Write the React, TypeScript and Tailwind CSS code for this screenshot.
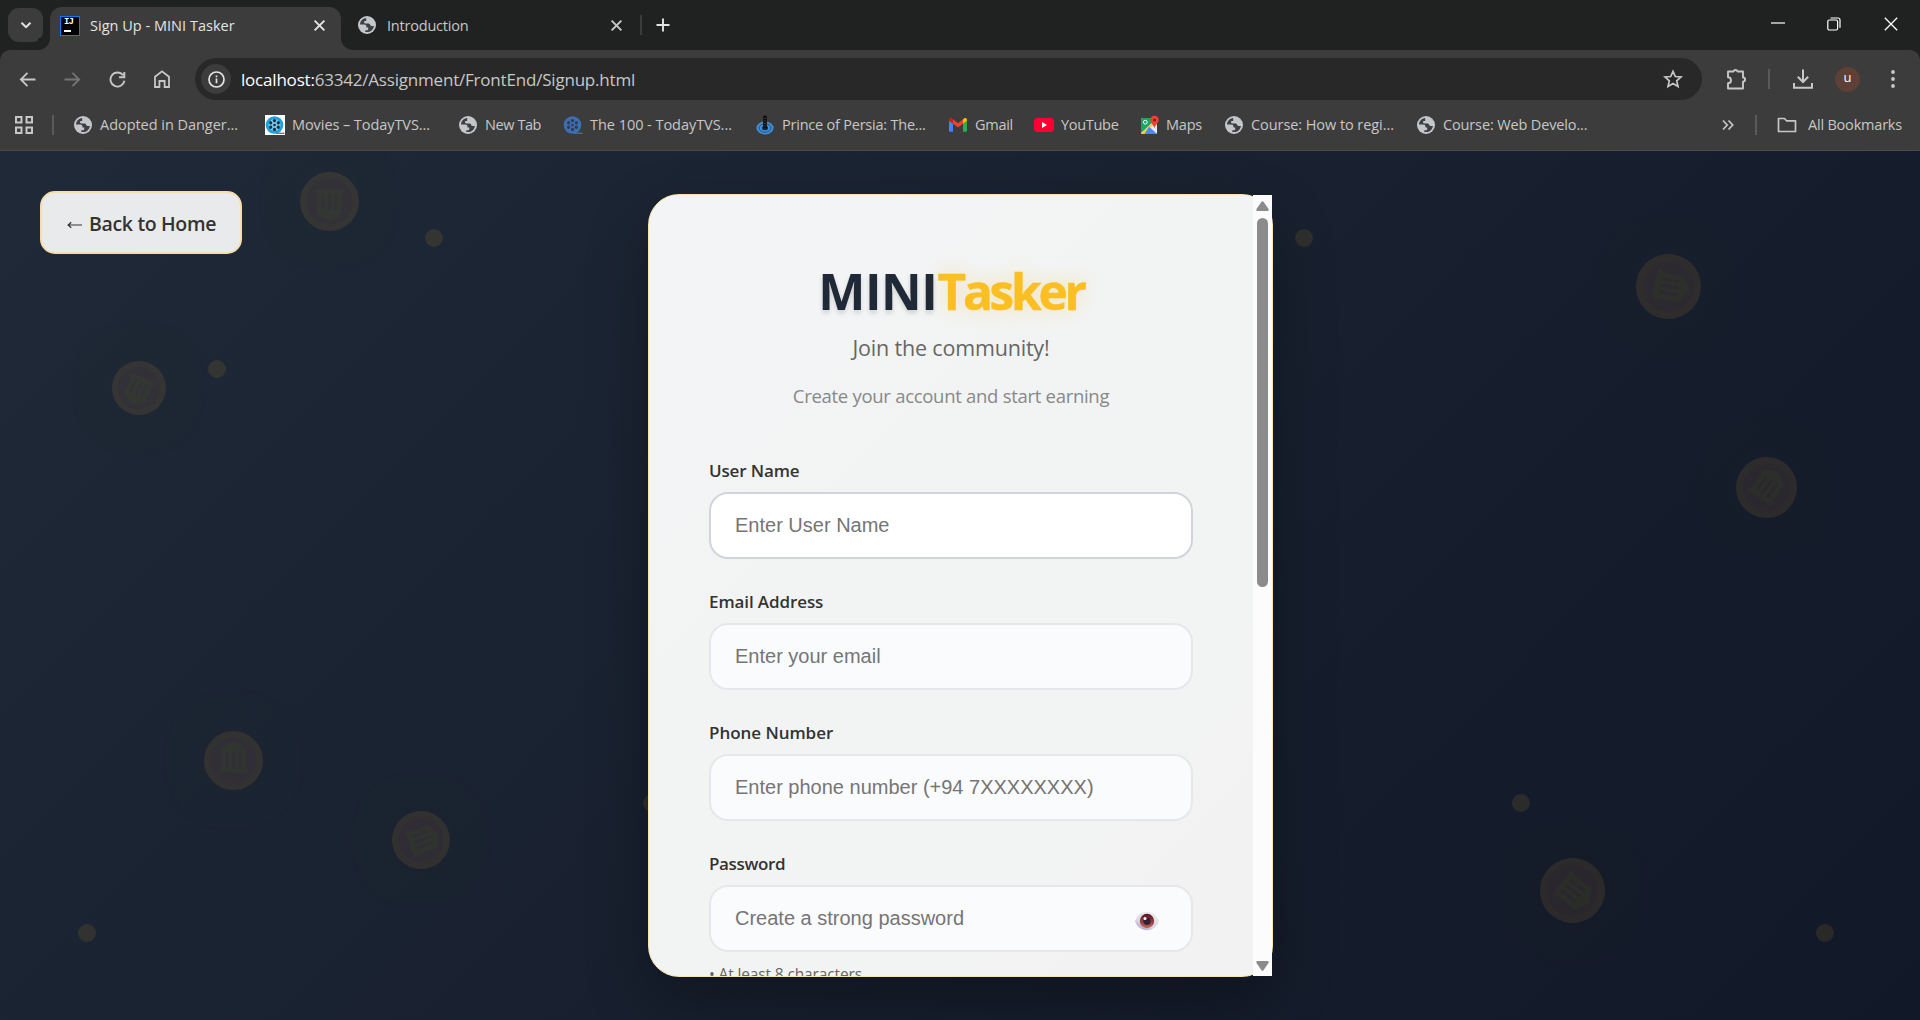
import type { ReactNode } from 'react';

function Globe({ className = 'size-[18px]' }: { className?: string }) {
  return (
    <svg viewBox="0 0 18 18" className={className}>
      <circle cx="9" cy="9" r="9" fill="#c3c6cb" />
      <path d="M8.2 1.9C4.7 2.2 2 5.1 2 8.6h4.2c1.4 0 2.3.9 2.3 2.1v.7h1.7v1.8c0 .7-.7 1-1.400 1H7.300v1.700c4 1 8.100-1.600 8.600-5.900h-2.300c-1 0-1.300-.6-1.600-1.400-.3-.8-1-1.100-1.900-1.100H7.300c-.8 0-1.300-.5-1.300-1.200 0-.8.5-1.300 1.300-1.300h.9V3.700c0-.6 0-1.200 0-1.800z" fill="#3f4043" />
    </svg>
  );
}

function Reel({ boxed = false }: { boxed?: boolean }) {
  const c = boxed ? '#1f9fe0' : '#3d6db5';
  const hole = boxed ? '#13303f' : '#343b49';
  return (
    <svg viewBox="0 0 20 20" className="size-5">
      {boxed && <rect width="20" height="20" fill="#fff" />}
      <circle cx="9.500" cy="10" r="8.800" fill={c} />
      {boxed && <circle cx="9.500" cy="10" r="6" fill="#7cc6ea" />}
      {[0, 60, 120, 180, 240, 300].map((a) => (
        <circle key={a} cx="9.500" cy="5.600" r="1.600" fill={hole} transform={`rotate(${a} 9.5 10)`} />
      ))}
      <circle cx="9.500" cy="10" r="1.300" fill={hole} />
      <path d="M11 18.300h8.500" stroke={boxed ? '#6d7a82' : c} strokeWidth="1.400" />
    </svg>
  );
}

function Persia() {
  return (
    <svg viewBox="0 0 20 20" className="size-5">
      <ellipse cx="10" cy="13" rx="8.600" ry="6.500" fill="#3f8fd6" />
      <ellipse cx="10" cy="13" rx="6" ry="4.300" fill="none" stroke="#24507c" />
      <ellipse cx="10" cy="13" rx="3" ry="2.200" fill="#16263a" />
      <path d="M8.200 1.500 10 .3l1.800 1.200V13H8.200z" fill="#0c0c0c" />
      <path d="M10 3v9" stroke="#777" strokeWidth=".8" strokeDasharray="1 1.500" />
    </svg>
  );
}

function Gmail() {
  return (
    <svg viewBox="0 0 18 18" className="size-[18px]">
      <path d="M0 4.500v10A1.200 1.200 0 0 0 1.200 15.700H4V7.600z" fill="#4285f4" />
      <path d="M18 4.500v10a1.200 1.200 0 0 1-1.200 1.200H14V7.600z" fill="#34a853" />
      <path d="M14 3.500v4.200l4-3V4c0-2-2-2.300-3-1.500z" fill="#fbbc04" />
      <path d="M0 4.700l4 3V3.500L3 2.500C2 1.700 0 2 0 4z" fill="#c5221f" />
      <path d="M4 7.700V3.300l5 3.900 5-3.900v4.400l-5 3.800z" fill="#ea4335" />
    </svg>
  );
}

function YouTube() {
  return (
    <svg viewBox="0 0 20 20" className="size-5">
      <rect y="3" width="20" height="14" rx="3.500" fill="#ff0033" />
      <path d="M8 7v6l5-3z" fill="#fff" />
    </svg>
  );
}

function Maps() {
  return (
    <svg viewBox="0 0 20 20" className="size-5">
      <rect x="1" y="3" width="16" height="16" rx="1.500" fill="#e8eaed" />
      <path d="M1 4.500A1.500 1.500 0 0 1 2.500 3H12v5L1 18z" fill="#1ea362" />
      <path d="M9 11.500 17 19H2.500z" fill="#4a89f3" />
      <path d="M1.200 18.300 13 7l2 2L4.600 19H2.500z" fill="#f7cb4d" />
      <path d="M9 11.800 16.500 19H4.500z" fill="#4a89f3" />
      <path d="M10.500 12.500 17 18.500V8z" fill="#e8eaed" />
      <circle cx="5.300" cy="7.200" r="1.900" fill="none" stroke="#fff" />
      <path d="M14.500.8c2.400 0 4.300 1.800 4.300 4.200 0 3.100-3.700 4.600-4.200 8.500-.6-3.900-4.400-5.400-4.400-8.500 0-2.400 1.900-4.200 4.300-4.200z" fill="#ea4335" />
      <circle cx="14.500" cy="5" r="1.500" fill="#8c1a12" />
    </svg>
  );
}

const bookmarks: { label: string; box: string; text: string; icon: ReactNode }[] = [
  { label: 'Adopted in Danger...', box: 'w-[191px]', text: 'tracking-[-0.04px]', icon: <Globe /> },
  { label: 'Movies – TodayTVS...', box: 'w-[194px]', text: 'tracking-[-0.07px] ml-[1px]', icon: <Reel boxed /> },
  { label: 'New Tab', box: 'w-[104px]', text: 'tracking-[-0.42px]', icon: <Globe /> },
  { label: 'The 100 - TodayTVS...', box: 'w-[192px]', text: 'tracking-[-0.04px] ml-[1px]', icon: <Reel /> },
  { label: 'Prince of Persia: The...', box: 'w-[194px]', text: 'tracking-[-0.22px] ml-[1px]', icon: <Persia /> },
  { label: 'Gmail', box: 'w-[85px]', text: 'tracking-[-0.27px]', icon: <Gmail /> },
  { label: 'YouTube', box: 'w-[106px]', text: 'tracking-[-0.3px] ml-[1px]', icon: <YouTube /> },
  { label: 'Maps', box: 'w-[85px]', text: 'tracking-[-0.23px]', icon: <Maps /> },
  { label: 'Course: How to regi...', box: 'w-[192px]', text: 'tracking-[-0.07px]', icon: <Globe /> },
  { label: 'Course: Web Develo...', box: 'w-[192px]', text: 'tracking-[-0.14px]', icon: <Globe /> },
];

function Cross({ className }: { className: string }) {
  return (
    <svg viewBox="0 0 12 12" className={className} fill="none" stroke="currentColor" strokeWidth="1.800">
      <path d="M1.500 1.500l9 9M10.500 1.500l-9 9" />
    </svg>
  );
}

function TabStrip() {
  return (
    <div className="flex h-[50px] items-end bg-[#202221] text-[14.5px] text-[#e3e3e3]">
      <div className="mb-2 ml-2 flex h-[34px] w-[35px] items-center justify-center rounded-[11px] bg-[#3c3c3c]">
        <svg viewBox="0 0 12 12" className="size-3" fill="none" stroke="#e3e3e3" strokeWidth="2">
          <path d="M1.500 3.800 6 8.200l4.500-4.400" />
        </svg>
      </div>
      <div className="ml-[-5px] size-3 bg-[#3c3c3c]">
        <div className="size-3 rounded-br-[12px] bg-[#202221]" />
      </div>
      <div className="flex h-[43px] w-[291px] items-center rounded-t-[12px] bg-[#3c3c3c] pb-[7px] pl-[10px]">
        <div className="mt-[2px] flex size-5 flex-col items-start border-[1.500px] border-[#0a7cff] bg-black pl-[3px]">
          <span className="h-[11px] font-['Liberation_Mono'] text-[9px] leading-[11px] font-bold tracking-[-1px] text-white">IJ</span>
          <span className="mt-[2px] h-[1.500px] w-[7px] bg-white" />
        </div>
        <span className="mt-[2px] ml-[10px] w-[223px] tracking-[0.02px]">Sign Up - MINI Tasker</span>
        <Cross className="size-[13px]" />
      </div>
      <div className="size-3 bg-[#3c3c3c]">
        <div className="size-3 rounded-bl-[12px] bg-[#202221]" />
      </div>
      <div className="flex h-[43px] items-center pb-[7px] pl-[5px]">
        <Globe className="size-[18px]" />
        <span className="mt-[2px] ml-[11px] w-[223px] tracking-[-0.2px] text-[#c7c7c7]">Introduction</span>
        <Cross className="size-[13px] text-[#c7c7c7]" />
        <span className="ml-[17px] h-5 w-[2px] bg-[#3c3c3c]" />
        <svg viewBox="0 0 14 14" className="ml-[14px] size-[14px]" stroke="#e3e3e3" strokeWidth="1.900">
          <path d="M7 .5v13M.5 7h13" />
        </svg>
      </div>
      <div className="mb-[19px] ml-auto flex w-[149px] items-center">
        <svg viewBox="0 0 14 14" className="size-[14px]" stroke="#fff" strokeWidth="1.200">
          <path d="M0 6h14" />
        </svg>
        <svg viewBox="0 0 14 14" className="ml-[42px] size-[14px]" fill="none" stroke="#fff" strokeWidth="1.200">
          <rect x=".8" y="3" width="9.800" height="10" rx="1.500" />
          <path d="M3.500 1h7.500a2 2 0 0 1 2 2v7.800" />
        </svg>
        <svg viewBox="0 0 14 14" className="ml-[43px] size-[14px]" stroke="#fff" strokeWidth="1.300">
          <path d="M.8.8l12.400 12.400M13.200.8.800 13.200" />
        </svg>
      </div>
    </div>
  );
}

function Toolbar() {
  return (
    <div className="flex h-[50px] items-center pt-[8px] pl-[19px] text-[#c7c7c7]">
      <svg viewBox="0 0 16 16" className="size-[17px]" fill="none" stroke="currentColor" strokeWidth="1.700">
        <path d="M15.500 8H1.500M8 1.700 1.700 8 8 14.300" />
      </svg>
      <svg viewBox="0 0 16 16" className="ml-[28px] size-[17px]" fill="none" stroke="#757575" strokeWidth="1.700">
        <path d="M.5 8h14M8 1.700 14.300 8 8 14.300" />
      </svg>
      <svg viewBox="0 0 16 16" className="ml-[28px] size-[17px]" fill="none" stroke="currentColor" strokeWidth="1.800">
        <path d="M14.500 9.200A6.600 6.600 0 1 1 13.200 4M14.400 1v4.900H9.500" />
      </svg>
      <svg viewBox="0 0 16 18" className="ml-[28px] h-[18px] w-4" fill="none" stroke="currentColor" strokeWidth="1.800">
        <path d="M1 17V6.800L8 1.300l7 5.500V17h-4.400v-6H5.400v6z" />
      </svg>
      <div className="ml-[25px] flex h-[42px] w-[1507px] items-center rounded-full bg-[#282828] pl-[6px]">
        <div className="flex size-[30px] items-center justify-center rounded-full bg-[#3c3c3c]">
          <svg viewBox="0 0 17 17" className="size-[17px]" fill="none" stroke="#e3e3e3" strokeWidth="1.700">
            <circle cx="8.500" cy="8.500" r="7.500" />
            <path d="M8.500 7.600v4.700M8.500 4.500v1.700" />
          </svg>
        </div>
        <span className="mt-px ml-[10px] w-[1420px] text-[17px] tracking-[-0.2px]">
          <span className="text-white">localhost:</span>63342/Assignment/FrontEnd/Signup.html
        </span>
        <svg viewBox="0 0 20 20" className="ml-[2px] size-5 shrink-0" fill="none" stroke="currentColor" strokeWidth="1.700">
          <path d="M10 2.300l2.300 5.200 5.700.5-4.300 3.800 1.300 5.600-5-3-5 3 1.300-5.600L2 8l5.700-.5z" />
        </svg>
      </div>
      <svg viewBox="0 0 22 22" className="ml-[24px] size-[22px]" fill="none" stroke="currentColor" strokeWidth="1.900">
        <path d="M2 3.500h5.500a2.100 2.100 0 0 1 4 0H17v6a2 2 0 0 1 0 4.200V20.500H2v-5.300a3 3 0 0 0 0-6z" strokeLinejoin="round" />
      </svg>
      <span className="ml-[20px] h-5 w-[2px] bg-[#5a5a5a]" />
      <svg viewBox="0 0 20 20" className="ml-[23px] size-5" fill="none" stroke="currentColor" strokeWidth="2">
        <path d="M10 .5v12M4.800 7.800 10 13l5.200-5.200M1 14v4.800h18V14" />
      </svg>
      <span className="ml-[22px] flex size-[25px] items-center justify-center rounded-full bg-[#5d4037] pb-[2px] text-[13px] text-white">u</span>
      <svg viewBox="0 0 4 18" className="ml-[31px] h-[18px] w-1" fill="currentColor">
        <circle cx="2" cy="2" r="1.900" />
        <circle cx="2" cy="9" r="1.900" />
        <circle cx="2" cy="16" r="1.900" />
      </svg>
    </div>
  );
}

function BookmarkBar() {
  return (
    <div className="flex h-[51px] items-center border-b border-[#4a4a4a] pl-[14px] text-[14.5px] text-[#c7c7c7]">
      <svg viewBox="0 0 20 20" className="size-5" fill="none" stroke="currentColor" strokeWidth="2">
        <path d="M2 2h5.500v5.500H2zM12.500 2H18v5.500h-5.500zM2 12.500h5.500V18H2zM12.500 12.500H18V18h-5.500z" />
      </svg>
      <span className="mr-[20px] ml-[18px] h-5 w-[2px] bg-[#5a5a5a]" />
      {bookmarks.map((b) => (
        <div key={b.label} className={`flex shrink-0 items-center whitespace-nowrap ${b.box}`}>
          <span className="w-[26px] shrink-0">{b.icon}</span>
          <span className={b.text}>{b.label}</span>
        </div>
      ))}
      <div className="ml-auto flex items-center pr-[18px]">
        <svg viewBox="0 0 12 12" className="size-3" fill="none" stroke="currentColor" strokeWidth="1.700">
          <path d="M1 1.500 5.200 6 1 10.500M6.500 1.500 10.700 6 6.500 10.500" />
        </svg>
        <span className="ml-[21px] h-5 w-[2px] bg-[#5a5a5a]" />
        <svg viewBox="0 0 20 16" className="ml-[20px] h-4 w-5" fill="none" stroke="currentColor" strokeWidth="1.700">
          <path d="M1.500 14.500v-13h6l2 2.300h9v10.700z" strokeLinejoin="round" />
        </svg>
        <span className="ml-[11px] tracking-[-0.2px]">All Bookmarks</span>
      </div>
    </div>
  );
}

const coins = [
  'left-[300px] top-[21px] size-[59px] rotate-180',
  'left-[112px] top-[210px] size-[54px] rotate-[205deg]',
  'left-[204px] top-[580px] size-[59px]',
  'left-[392px] top-[660px] size-[58px] rotate-[70deg]',
  'left-[1636px] top-[103px] size-[65px] rotate-[100deg]',
  'left-[1736px] top-[306px] size-[61px] rotate-[35deg]',
  'left-[1540px] top-[707px] size-[65px] rotate-[128deg]',
];

const dots = [
  'left-[425px] top-[78px]',
  'left-[208px] top-[209px]',
  'left-[1295px] top-[78px]',
  'left-[643px] top-[643px]',
  'left-[1512px] top-[643px]',
  'left-[78px] top-[773px]',
  'left-[1816px] top-[773px]',
];

function Coin({ place }: { place: string }) {
  return (
    <div className={`absolute rounded-full opacity-10 shadow-[0_0_50px_rgba(251,191,36,0.18)] ${place}`}>
      <svg viewBox="0 0 60 60" className="size-full">
        <circle cx="30" cy="30" r="30" fill="#fbb22c" />
        <circle cx="30" cy="30" r="23.500" fill="#ee8a58" />
        <path d="M30 10.500 43 18v3H17v-3zM18 21h4.500v17H18zM25 21h3.500v17H25zM31.500 21H35v17h-3.500zM38 21h4.500v17H38zM16 38h28v4.500H16z" fill="#f2c81c" />
      </svg>
    </div>
  );
}

function Eye() {
  return (
    <svg viewBox="0 0 24 20" className="absolute top-[24px] right-[32px] h-5 w-6">
      <defs>
        <linearGradient id="white" x1="0" y1="1" x2=".6" y2="0">
          <stop offset="0" stopColor="#9d8ac4" />
          <stop offset=".45" stopColor="#dcd9e2" />
          <stop offset="1" stopColor="#e9e9ea" />
        </linearGradient>
        <linearGradient id="iris" x1="0" y1="0" x2="0" y2="1">
          <stop offset="0" stopColor="#5c0f2c" />
          <stop offset="1" stopColor="#bd6a55" />
        </linearGradient>
      </defs>
      <path d="M0 10.300C2 4.500 6.500.8 12 .8s10 3.700 12 9.500c-2 5.500-6.500 9-12 9s-10-3.500-12-9z" fill="url(#white)" />
      <circle cx="12" cy="10" r="7.200" fill="url(#iris)" />
      <circle cx="12" cy="10.200" r="3.700" fill="#37202b" />
      <circle cx="10" cy="7.600" r="1.500" fill="#fff" />
    </svg>
  );
}

const fields = [
  { label: 'User Name', text: 'tracking-[-0.14px]', hint: 'Enter User Name', look: 'bg-white border-[#d1d5db]' },
  { label: 'Email Address', text: 'tracking-[-0.1px]', hint: 'Enter your email', look: 'bg-[#fafbfd] border-[#e5e7eb]' },
  { label: 'Phone Number', text: 'tracking-[-0.04px]', hint: 'Enter phone number (+94 7XXXXXXXX)', look: 'bg-[#fafbfd] border-[#e5e7eb]' },
  { label: 'Password', text: 'tracking-[-0.35px]', hint: 'Create a strong password', look: 'bg-[#fafbfd] border-[#e5e7eb]', eye: true },
];

function SignupCard() {
  return (
    <div className="relative flex h-[783px] w-[625px] shrink-0 rounded-[31px] border border-[#fbe3ab] bg-linear-[135deg,#f3f4f6_0%,#f3f4f6_15%,#f2f4f3_35%,#f2f4f3_70%,#f2f2f2_85%] shadow-[0_25px_62px_rgba(0,0,0,0.3)]">
      <div className="h-[781px] w-[604px] overflow-hidden rounded-l-[30px] pt-[60px] pr-[60px] pl-[60px]">
        <h1 className="flex h-[72px] items-center justify-center text-[50px] leading-[72px] font-bold">
          <span className="tracking-[-0.4px] text-[#1f2937] [text-shadow:0_2.500px_5px_rgba(0,0,0,0.15)]">MINI</span>
          <span className="text-[49.500px] tracking-[-3.200px] text-[#fbbf24] [-webkit-text-stroke:0.5px_#fbbf24] [text-shadow:0_0_20px_rgba(251,191,36,0.3)]">Tasker</span>
        </h1>
        <p className="mt-[6px] text-center text-[21.500px] leading-[30px] tracking-[-0.18px] text-[#666]">Join the community!</p>
        <p className="mt-[19px] text-center text-[18.500px] leading-[28px] tracking-[-0.29px] text-[#888]">Create your account and start earning</p>
        <div className="mt-[49px]">
          {fields.map((f) => (
            <div key={f.label} className="relative h-[131px]">
              <label className={`block h-[33px] text-[17px] leading-[23px] font-semibold text-[#333] ${f.text}`}>{f.label}</label>
              <div className={`relative flex h-[67px] w-[484px] items-center rounded-[19px] border-2 pb-[2px] pl-[24px] font-['Liberation_Sans',sans-serif] text-[20px] text-[#757575] ${f.look}`}>
                {f.hint}
                {f.eye && <Eye />}
              </div>
              {f.eye && <p className="mt-[11px] text-[15.500px] leading-[22px] tracking-[-0.14px] text-[#666]">• At least 8 characters</p>}
            </div>
          ))}
        </div>
      </div>
      <div className="flex w-[19px] shrink-0 flex-col items-center bg-[#fcfcfc] pt-[6px] pb-[5px]">
        <svg viewBox="0 0 13 10" className="h-[10px] w-[13px]" fill="#8b8b8b">
          <path d="M5.500.8q1-1.300 2 0l5 7.200q.7 1.800-1 2H1.500q-1.700-.2-1-2z" />
        </svg>
        <div className="mt-[7px] h-[369px] w-[11px] rounded-full bg-[#8b8b8b]" />
        <svg viewBox="0 0 13 10" className="mt-auto h-[10px] w-[13px]" fill="#8b8b8b">
          <path d="M5.500 9.200q1 1.300 2 0l5-7.200q.7-1.800-1-2H1.500q-1.700.2-1 2z" />
        </svg>
      </div>
    </div>
  );
}

export default function App() {
  return (
    <div className="flex h-[1020px] w-[1920px] flex-col overflow-hidden bg-[#202221] font-['Open_Sans','Noto_Sans',sans-serif]">
      <TabStrip />
      <div className="h-[101px] shrink-0 rounded-t-[10px] bg-[#3c3c3c]">
        <Toolbar />
        <BookmarkBar />
      </div>
      <main className="relative flex h-[869px] justify-center overflow-hidden bg-linear-[135deg,#1f2937,#111827] pt-[43px] pl-px">
        {coins.map((c) => (
          <Coin key={c} place={c} />
        ))}
        {dots.map((d) => (
          <span key={d} className={`absolute size-[18px] rounded-full bg-[#fbbf24] opacity-10 ${d}`} />
        ))}
        <button className="absolute top-[40px] left-[40px] flex h-[63px] w-[202px] items-center rounded-[15px] border-2 border-[#f4dfab] bg-[#e9eaec] pt-[2px] pl-[24px] text-[19.500px] font-semibold text-[#333]">
          <svg viewBox="0 0 16 10" className="mt-[2px] mr-[7px] ml-[1px] h-[10px] w-[15px]" fill="none" stroke="#333" strokeWidth="1.300">
            <path d="M16 5H1.500M4.500 2 1.200 5 4.500 8" />
          </svg>
          <span className="tracking-[-0.34px]">Back to Home</span>
        </button>
        <SignupCard />
      </main>
    </div>
  );
}
